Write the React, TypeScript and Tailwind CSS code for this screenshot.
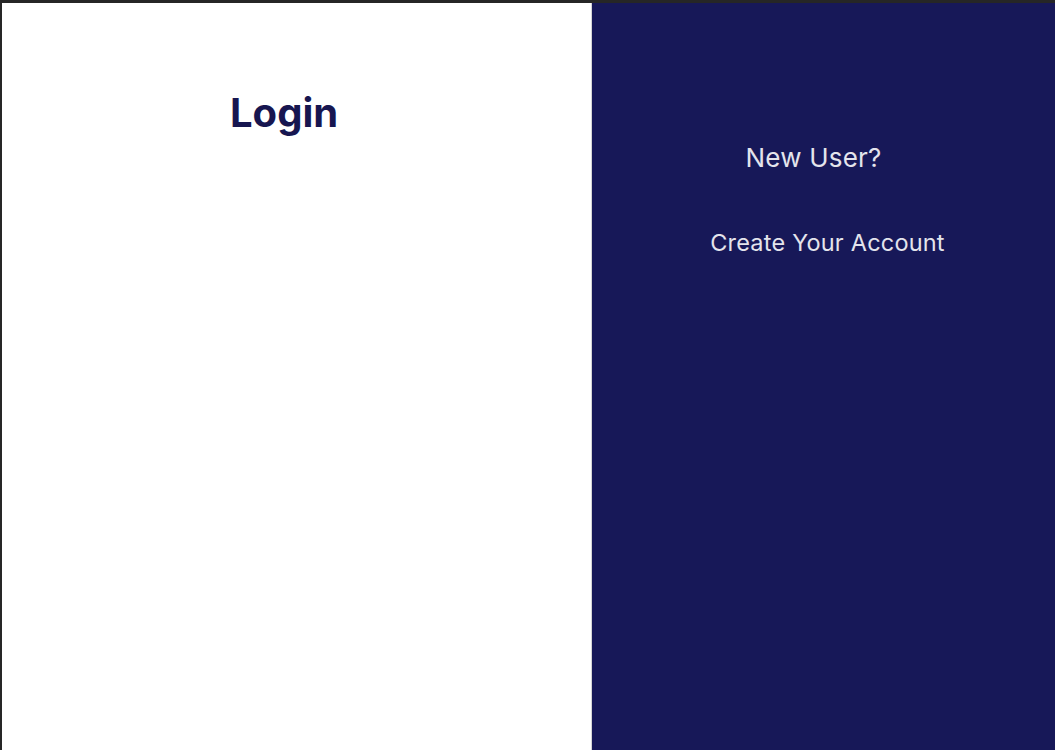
import React from "react";

const App: React.FC = () => {
  return (
    <div
      className="w-[1055px] h-[750px] bg-[#262626] pt-[3px] pl-[2px] overflow-hidden"
      style={{ fontFamily: "Inter, 'Noto Sans', sans-serif" }}
    >
      <div className="flex h-full">
        <div className="w-[590px] h-full bg-white border-r border-[#d4d4d4] flex flex-col">
          <h1 className="pt-[86px] pl-[228px] text-[40px] font-bold leading-[1.2] text-[#171650]">Login</h1>
        </div>
        <div className="flex-1 h-full bg-[#171858] flex flex-col items-center text-[#e4e4ec]">
          <p className="pt-[138px] pr-[20px] text-[26px] leading-[1.3] tracking-[0.2px]">New User?</p>
          <p className="mt-[53px] pl-[8px] text-[23.5px] leading-[1.3] tracking-[0.2px]">Create Your Account</p>
        </div>
      </div>
    </div>
  );
};

export default App;
